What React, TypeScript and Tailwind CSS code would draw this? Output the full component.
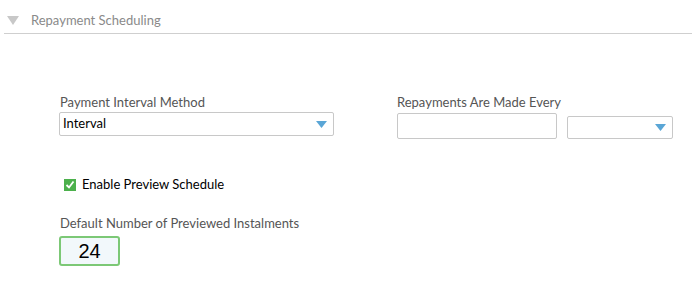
export default function App() {
  return (
    <div className="h-[292px] w-[692px] bg-white font-['Lato','Open_Sans',sans-serif]">
      <div className="ml-[4px] flex h-[34px] items-end border-b border-[#cfcfcf] pb-[5px]">
        <svg width="12" height="9" viewBox="0 0 12 9" className="mb-[3px] ml-[3px]">
          <path d="M0 0 L12 0 L6 9 Z" fill="#c8c8c8" />
        </svg>
        <span className="ml-[12px] text-[13px] leading-[16px] text-[#8a8a8a]">Repayment Scheduling</span>
      </div>

      <div className="mt-[60px] flex pl-[59px]">
        <div className="w-[275px]">
          <div className="pl-[1px] text-[13px] leading-[16px] text-[#555]">Payment Interval Method</div>
          <div className="mt-[2px] flex h-[24px] items-center justify-between rounded-[2px] border border-[#c8c8c8] pl-[3px] pr-[6px]">
            <span className="text-[13px] text-black">Interval</span>
            <svg width="11" height="7" viewBox="0 0 11 7">
              <path d="M0 0 L11 0 L5.5 7 Z" fill="#5aa6d6" />
            </svg>
          </div>
        </div>
        <div className="ml-[63px]">
          <div className="text-[13px] leading-[16px] text-[#555]">Repayments Are Made Every</div>
          <div className="mt-[3px] flex items-start gap-[10px]">
            <div className="h-[26px] w-[160px] rounded-[2px] border border-[#c8c8c8]" />
            <div className="mt-[3px] flex h-[23px] w-[106px] items-center justify-end rounded-[2px] border border-[#c8c8c8] pr-[6px]">
              <svg width="11" height="7" viewBox="0 0 11 7">
                <path d="M0 0 L11 0 L5.5 7 Z" fill="#5aa6d6" />
              </svg>
            </div>
          </div>
        </div>
      </div>

      <div className="mt-[36px] flex items-center pl-[64px]">
        <div className="flex h-[12px] w-[12px] items-center justify-center bg-[#4cb04c]">
          <svg width="10" height="9" viewBox="0 0 10 9">
            <path d="M1.5 5 L4 7.5 L8.5 1.5" stroke="#fff" strokeWidth="1.8" fill="none" />
          </svg>
        </div>
        <span className="ml-[6px] text-[13px] text-black">Enable Preview Schedule</span>
      </div>

      <div className="mt-[20px] pl-[60px] text-[13px] leading-[16px] text-[#555]">Default Number of Previewed Instalments</div>
      <div className="ml-[59px] mt-[5px] flex h-[30px] w-[61px] items-center justify-center rounded-[3px] border-2 border-[#7cc876] bg-[#f2f8fb] font-['Liberation_Sans',Arial,sans-serif] text-[20px] text-black">
        24
      </div>
    </div>
  );
}
